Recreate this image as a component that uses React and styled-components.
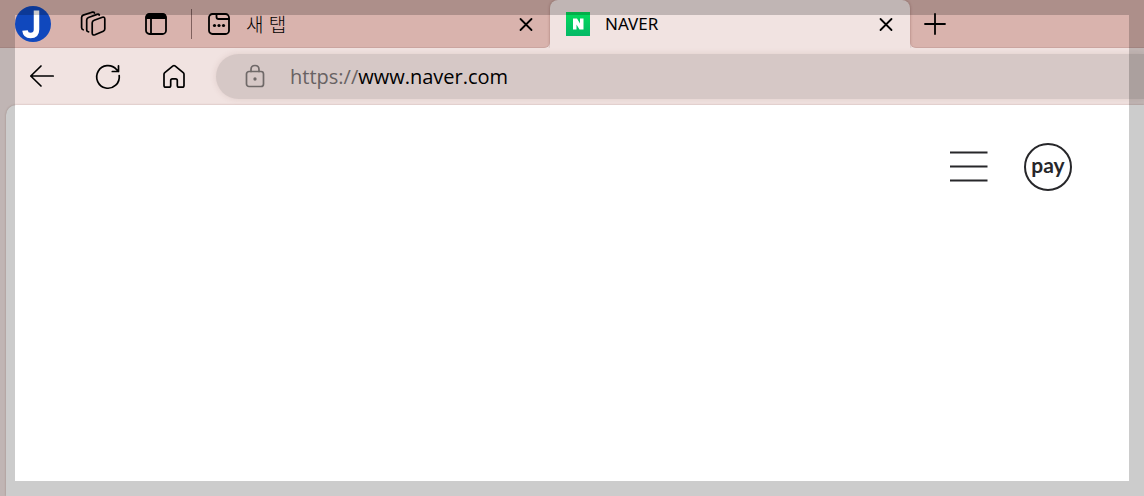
import React from "react";
import styled, { createGlobalStyle } from "styled-components";

const GlobalStyle = createGlobalStyle`
  * { box-sizing: border-box; }
  html, body { margin: 0; overflow: hidden; }
  body { font-family: "Noto Sans", "Noto Sans CJK KR", sans-serif; color: #000; }
  button, input { font: inherit; color: inherit; }
`;

const Browser = styled.div`
  display: flex;
  flex-direction: column;
  min-height: 100vh;
  background: #f1e3e1;
`;

const TabStrip = styled.header`
  display: flex;
  height: 48px;
  background: #f1e3e1;
`;

const StripTools = styled.div`
  display: flex;
  align-items: center;
  flex: 0 0 190px;
  gap: 29px;
  padding-left: 15px;
  background: #d9b3ad;
  border-bottom: 1px solid #cba5a0;
`;

const IconButton = styled.button`
  display: grid;
  place-items: center;
  flex: none;
  width: ${(p) => p.$size || 28}px;
  height: ${(p) => p.$size || 28}px;
  padding: 0;
  border: 0;
  background: none;
  color: ${(p) => p.$color || "#000"};

  svg { display: block; }
`;

const Profile = styled.button`
  flex: none;
  width: 36px;
  height: 36px;
  padding: 0;
  border: 0;
  border-radius: 50%;
  background: #1048bd;

  svg { display: block; }
`;

const Tab = styled.div`
  display: flex;
  align-items: center;
  flex: 0 1 360px;
  padding: 0 12px 0 16px;
  background: ${(p) => (p.$active ? "#f1e3e1" : "#d9b3ad")};
  border-radius: ${(p) => (p.$active ? "8px 8px 0 0" : "0 0 6px 0")};
  border-bottom: 1px solid ${(p) => (p.$active ? "#f1e3e1" : "#cba5a0")};
  box-shadow: ${(p) => (p.$active ? "0 0 3px rgba(90, 40, 35, 0.4)" : "none")};
  clip-path: ${(p) => (p.$active ? "inset(0 -3px 0 -3px)" : "none")};
`;

const Divider = styled.span`
  flex: none;
  align-self: center;
  width: 1px;
  height: 30px;
  margin: 0 15px 0 -15px;
  background: #80615e;
`;

const TabTitle = styled.span`
  flex: 1;
  margin-left: 15px;
  font-size: 17px;
  line-height: 24px;
  white-space: nowrap;

  &:lang(ko) {
    font-family: "Noto Sans CJK KR", sans-serif;
    font-size: 19px;
    font-weight: 300;
  }
`;

const StripEnd = styled.div`
  display: flex;
  align-items: center;
  flex: 1;
  padding-left: 11px;
  background: #d9b3ad;
  border-bottom: 1px solid #cba5a0;
  border-radius: 0 0 0 6px;
`;

/* The strip colour that shows behind the rounded top corners of the active tab. */
const ActiveSlot = styled.div`
  display: flex;
  flex: 0 1 360px;
  background: linear-gradient(#d9b3ad 10px, #f1e3e1 10px);

  > * { flex: 1; }
`;

const Toolbar = styled.nav`
  display: flex;
  align-items: center;
  height: 57px;
  padding-left: 28px;
  gap: 38px;
`;

const AddressBar = styled.form`
  display: flex;
  align-items: center;
  flex: 1;
  height: 45px;
  margin-left: -10px;
  padding-left: 25px;
  border-radius: 23px 0 0 23px;
  background: #d6c8c6;
  box-shadow: 0 0 6px rgba(120, 70, 65, 0.14);
  font-family: "Open Sans", "Noto Sans", sans-serif;
  font-size: 20px;
  line-height: 28px;
`;

const Scheme = styled.label`
  margin-left: 21px;
  color: #686263;
`;

const AddressInput = styled.input`
  flex: 1;
  min-width: 0;
  padding: 0;
  border: 0;
  outline: 0;
  background: none;
`;

const Page = styled.main`
  flex: 1;
  margin-left: 6px;
  background: #fff;
  border-radius: 10px 0 0 0;
  box-shadow: 0 0 2px rgba(90, 40, 35, 0.35);
`;

const PageActions = styled.div`
  display: flex;
  justify-content: flex-end;
  align-items: center;
  gap: 36px;
  padding: 38px 72px 0 0;
`;

const PayLink = styled.a`
  display: block;
  width: 48px;
  height: 48px;
  border: 2px solid #27272a;
  border-radius: 50%;
  color: #27272a;
  font-family: Lato, sans-serif;
  font-size: 21px;
  font-weight: 700;
  line-height: 40px;
  text-align: center;
  text-decoration: none;
`;

/* Translucent frame that dims the edge of the whole window. */
const Frame = styled.div`
  position: fixed;
  inset: 0;
  border: 15px solid rgba(0, 0, 0, 0.2);
  pointer-events: none;
`;

const Icon = ({ size = 24, sw = 2, children }) => (
  <svg width={size} height={size} viewBox={`0 0 ${size} ${size}`} fill="none" stroke="currentColor"
    strokeWidth={sw} strokeLinecap="round" strokeLinejoin="round" aria-hidden="true">
    {children}
  </svg>
);

const Close = () => (
  <Icon sw={1.8}><path d="M6.5 7l11 11M17.5 7l-11 11" /></Icon>
);

export default function App() {
  return (
    <>
      <GlobalStyle />
      <Browser>
        <TabStrip>
          <StripTools>
            <Profile aria-label="Profile">
              <svg width="36" height="36" viewBox="0 0 36 36" aria-hidden="true">
                <path d="M21.5 4.5V23.5Q21.5 29.5 15.5 29.5Q10.5 29.5 10 24.5" fill="none" stroke="#fff" strokeWidth="5.5" />
              </svg>
            </Profile>
            <IconButton aria-label="Workspaces">
              <Icon size={28} sw={1.7}>
                <path d="M14.2 10.2 22.4 7.2Q24.8 6.6 24.8 9V19Q24.8 20.600 23.300 21.200L15 24.800Q12.200 25.600 12.200 23V12.800Q12.200 10.900 14.200 10.200Z" />
                <path d="M8.600 21.800Q6.700 21.800 6.700 19.700V10Q6.700 8.200 8.500 7.500L17 4.400Q18.700 3.800 19.300 5" />
                <path d="M3.200 19.800Q1.600 19.300 1.600 17.500V7.500Q1.600 5.800 3.200 5.100L12 2.200Q14 1.800 14.500 3" />
              </Icon>
            </IconButton>
            <IconButton aria-label="Tab actions" $size={38}>
              <Icon sw={1.8}>
                <rect x="2" y="2" width="20" height="20" rx="3.5" />
                <path d="M2.5 6V5Q2.5 2.500 5 2.500H19Q21.500 2.500 21.500 5V6Z" fill="currentColor" />
                <path d="M7 7V22" />
              </Icon>
            </IconButton>
          </StripTools>
          <Tab>
            <Divider />
            <Icon sw={1.8}>
              <rect x="2" y="2" width="20" height="20" rx="3.500" />
              <path d="M9.500 2V5Q9.500 7 11.500 7H22" />
              <g fill="currentColor" stroke="none">
                <circle cx="7.500" cy="13.500" r="1.600" /><circle cx="12" cy="13.500" r="1.600" /><circle cx="16.500" cy="13.500" r="1.600" />
              </g>
            </Icon>
            <TabTitle lang="ko">새 탭</TabTitle>
            <IconButton aria-label="Close 새 탭" $size={24}><Close /></IconButton>
          </Tab>
          <ActiveSlot>
            <Tab $active>
              <svg width="24" height="24" viewBox="0 0 24 24" aria-hidden="true">
                <defs>
                  <linearGradient id="naver" x1="0" y1="0" x2="0" y2="1">
                    <stop offset="0" stopColor="#02dc5c" /><stop offset="1" stopColor="#04b866" />
                  </linearGradient>
                </defs>
                <rect width="24" height="24" fill="url(#naver)" />
                <path d="M7 6.500H11L14 11.500V6.500H17.500V17.500H13.500L10.500 12.500V17.500H7Z" fill="#fff" />
              </svg>
              <TabTitle>NAVER</TabTitle>
              <IconButton aria-label="Close NAVER" $size={24}><Close /></IconButton>
            </Tab>
          </ActiveSlot>
          <StripEnd>
            <IconButton aria-label="New tab">
              <Icon size={28} sw={1.8}><path d="M14 4V24M4 14H24" /></Icon>
            </IconButton>
          </StripEnd>
        </TabStrip>
        <Toolbar>
          <IconButton aria-label="Back">
            <Icon size={28} sw={1.7}><path d="M25.200 13H2.800M13 3 2.800 13 13 23" /></Icon>
          </IconButton>
          <IconButton aria-label="Refresh">
            <Icon size={28} sw={1.700}><path d="M25.200 12.500A11.300 11.300 0 1 1 22.500 6.500L24.500 8.500M24.500 2.800V8.500H18.300" /></Icon>
          </IconButton>
          <IconButton aria-label="Home">
            <Icon size={28} sw={1.700}>
              <path d="M4 11.300Q4 10.300 4.800 9.600L13 2.900Q14 2.200 15 2.900L23.200 9.600Q24 10.300 24 11.300V22.500Q24 24.200 22.200 24.200H19Q17.300 24.200 17.300 22.500V17.500Q17.300 15.800 15.600 15.800H12.400Q10.700 15.800 10.700 17.500V22.500Q10.700 24.200 9 24.200H5.800Q4 24.200 4 22.500Z" />
            </Icon>
          </IconButton>
          <AddressBar onSubmit={(e) => e.preventDefault()}>
            <IconButton type="button" aria-label="Site information" $color="#6f6968">
              <Icon size={28} sw={1.700}>
                <rect x="5.500" y="8.500" width="17" height="15" rx="2.500" />
                <path d="M10 8.500V6.500Q10 2.500 14 2.500T18 6.500V8.500" />
                <circle cx="14" cy="16" r="0.800" fill="currentColor" />
              </Icon>
            </IconButton>
            <Scheme htmlFor="address">https://</Scheme>
            <AddressInput id="address" type="text" defaultValue="www.naver.com" spellCheck={false} />
          </AddressBar>
        </Toolbar>
        <Page>
          <PageActions>
            <IconButton aria-label="Menu" $size={38} $color="#27272a">
              <svg width="38" height="38" viewBox="0 0 38 38" stroke="currentColor" strokeWidth="2" aria-hidden="true">
                <path d="M0 4.500H37.500M0 18.500H37.500M0 32.500H37.500" />
              </svg>
            </IconButton>
            <PayLink href="#pay">pay</PayLink>
          </PageActions>
        </Page>
      </Browser>
      <Frame />
    </>
  );
}
